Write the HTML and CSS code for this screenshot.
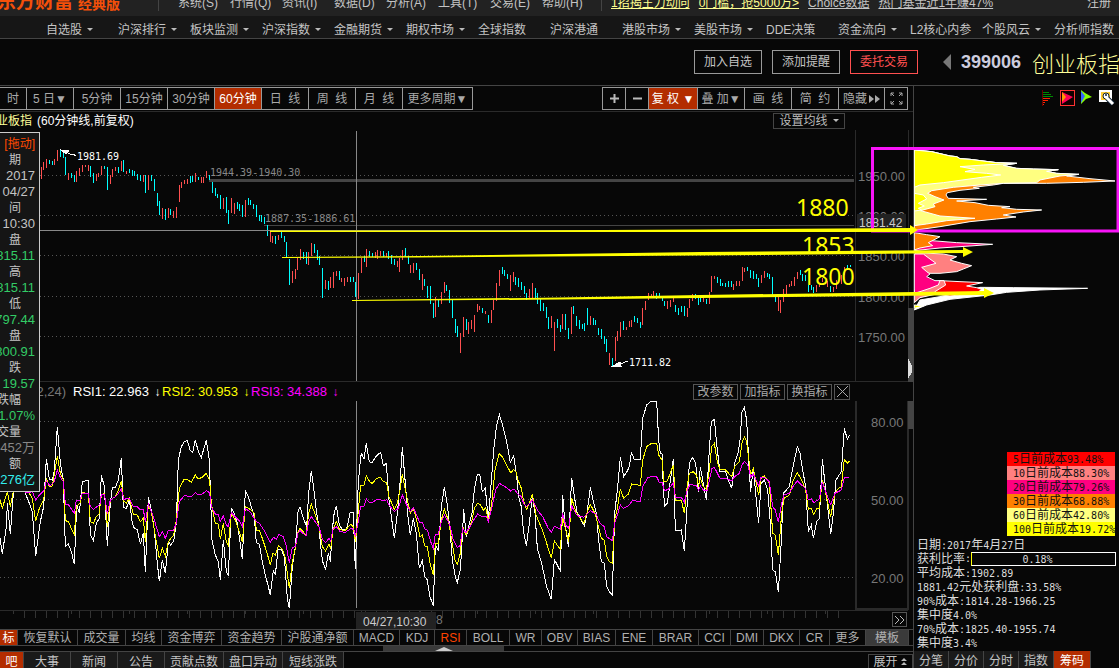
FILE: index.html
```html
<!DOCTYPE html>
<html lang="zh-CN">
<head>
<meta charset="utf-8">
<title>东方财富 经典版</title>
<link rel="stylesheet" href="styles.css">
</head>
<body>
<header class="topbar">
  <div class="logo"><span class="logo-main">东方财富</span><span class="logo-sub">经典版</span></div>
  <nav class="menu">
    <button>系统(S)</button><button>行情(Q)</button><button>资讯(I)</button><button>数据(D)</button><button>分析(A)</button><button>工具(T)</button><button>交易(E)</button><button>帮助(H)</button>
  </nav>
  <div class="promos">
    <a class="hot" href="#">1招揭主力动向</a><a class="hot" href="#">0门槛，抢5000万&gt;</a><a href="#">Choice数据</a><a href="#">热门基金近1年赚47%</a>
  </div>
  <a class="signup" href="#">注册</a>
</header>
<nav class="markets">
  <button class="drop">自选股</button><button class="drop">沪深排行</button><button class="drop">板块监测</button><button class="drop">沪深指数</button><button class="drop">金融期货</button><button class="drop">期权市场</button><button>全球指数</button><button>沪深港通</button><button class="drop">港股市场</button><button class="drop">美股市场</button><button>DDE决策</button><button class="drop">资金流向</button><button>L2核心内参</button><button class="drop">个股风云</button><button>分析师指数</button>
</nav>
<section class="quote">
  <div class="quote-actions">
    <button>加入自选</button><button>添加提醒</button><button class="trade">委托交易</button>
  </div>
  <button class="prev" aria-label="上一只"></button>
  <strong class="code">399006</strong>
  <h1 class="name">创业板指</h1>
</section>
<main class="work">
  <div class="left">
    <div class="toolbar">
      <div class="group">
        <button class="w27">时</button><button class="w47">5 日▼</button><button class="w47">5分钟</button><button class="w47">15分钟</button><button class="w47">30分钟</button><button class="w47 on">60分钟</button><button class="w47">日&nbsp; 线</button><button class="w47">周&nbsp; 线</button><button class="w47">月&nbsp; 线</button><button class="w70">更多周期▼</button>
      </div>
      <div class="group tools">
        <button class="w23" aria-label="放大"><svg width="9" height="9" viewBox="0 0 9 9"><path d="M0 4.500H9M4.500 0V9" stroke="#bbb" stroke-width="2"/></svg></button><button class="w23" aria-label="缩小"><svg width="9" height="9" viewBox="0 0 9 9"><path d="M0 4.500H9" stroke="#bbb" stroke-width="2"/></svg></button><button class="w49 on">复 权 ▼</button><button class="w47">叠 加▼</button><button class="w47">画&nbsp; 线</button><button class="w47">简&nbsp; 约</button>
        <button class="w46">隐藏<svg width="11" height="8" viewBox="0 0 11 8"><path d="M0 0L5 4L0 8ZM6 0L11 4L6 8Z" fill="#aaa"/></svg></button>
        <button class="w23" aria-label="全屏"><svg width="13" height="13" viewBox="0 0 13 13"><path d="M1 4V1H4M1 1L4 4M9 1H12V4M12 1L9 4M1 9V12H4M1 12L4 9M12 9V12H9M12 12L9 9" fill="none" stroke="#aaa"/></svg></button>
      </div>
    </div>
    <section class="price">
      <div class="chart-head">
        <span class="stock">业板指</span><span class="period">(60分钟线,前复权)</span>
        <button class="ma drop">设置均线</button>
      </div>
      <div class="plot">
        <svg class="price-svg" width="913" height="252" viewBox="0 130 913 252">
          <path class="grid" d="M40 175.5H854M40 215.5H854M40 255.5H854M40 296.5H854M40 336.5H854"/>
          <rect x="209" y="179" width="645" height="3" fill="#444"/>
          <rect x="264" y="225" width="590" height="1" fill="#444"/>
          <path class="down" id="down"/><path class="up" id="up"/>
          <path class="cross" d="M40 230.5H855M356.5 131V381"/>
          <path class="frame" d="M855.5 130V382M908.5 130V382M0 381.5H908"/>
          <text class="mono grey" x="210" y="176">1944.39-1940.30</text>
          <text class="mono grey" x="265" y="222">1887.35-1886.61</text>
          <text class="mono" x="77" y="160">1981.69</text>
          <text class="mono" x="629" y="366">1711.82</text>
          <path d="M61 150L69 151L66 154ZM66 152L70 154H73L76 156M613 366L620 362L621 366ZM620 364L628 361" fill="#fff" stroke="#fff"/>
          <g class="axis"><text x="858" y="181">1950.00</text><text x="858" y="221">1900.00</text><text x="858" y="261">1850.00</text><text x="858" y="302">1800.00</text><text x="858" y="342">1750.00</text></g>
          <rect x="857" y="214" width="49" height="15" fill="#222"/>
          <text class="cursor" x="859" y="227">1881.42</text>
          <rect x="908" y="308" width="6" height="74" fill="#444"/>
          <path d="M908 358L912 366V372L908 379Z" fill="#ddd"/>
        </svg>
      </div>
    </section>
    <section class="rsi">
      <div class="rsi-head">
        <span class="params">(6,12,24)</span>
        <span class="r1">RSI1: 22.963<i>↓</i></span><span class="r2">RSI2: 30.953<i>↓</i></span><span class="r3">RSI3: 34.388<i>↓</i></span>
        <div class="rsi-actions"><button>改参数</button><button>加指标</button><button>换指标</button><button class="close" aria-label="关闭"><svg width="11" height="11" viewBox="0 0 11 11"><path d="M0 0L11 11M11 0L0 11" stroke="#aaa"/></svg></button></div>
      </div>
      <div class="plot">
        <svg class="rsi-svg" width="913" height="228" viewBox="0 401 913 228">
          <path class="grid" d="M0 421.5H855M0 499.5H855M0 577.5H855"/>
          <path class="cross" d="M356.5 401V608"/>
          <polyline class="l1" id="rsi1"/><polyline class="l2" id="rsi2"/><polyline class="l3" id="rsi3"/>
          <path class="frame thick" d="M855.5 401V608.5H908V401"/>
          <path class="frame" d="M0 610.5H908"/>
          <path d="M24 614H845" stroke="#333" stroke-width="7" stroke-dasharray="1 10"/>
          <path d="M13 612H845" stroke="#333" stroke-width="3" stroke-dasharray="1 57"/>
          <g class="axis"><text x="871" y="427">80.00</text><text x="871" y="505">50.00</text><text x="871" y="583">20.00</text></g>
          <rect x="356" y="612" width="80" height="17" fill="#222"/>
          <text class="cursor" x="363" y="626">04/27,10:30</text>
          <text class="axis-small" x="436" y="624">8</text>
          <rect x="908" y="401" width="6" height="28" fill="#444"/>
          <path d="M892.5 612.5H906.5V626.5H892.5Z" fill="none" stroke="#555"/>
          <path d="M895 616L899 620L895 624M900 616L904 620L900 624" fill="none" stroke="#bbb"/>
        </svg>
      </div>
    </section>
    <div class="indicators">
      <button class="on t18">标</button><button class="t60">恢复默认</button><button class="t48">成交量</button><button class="t36">均线</button><button class="t60">资金博弈</button><button class="t60">资金趋势</button><button class="t72">沪股通净额</button><button class="t46">MACD</button><button class="t35">KDJ</button><button class="t32 red">RSI</button><button class="t43">BOLL</button><button class="t32">WR</button><button class="t36">OBV</button><button class="t38">BIAS</button><button class="t37">ENE</button><button class="t46">BRAR</button><button class="t32">CCI</button><button class="t33">DMI</button><button class="t36">DKX</button><button class="t30">CR</button><button class="t36">更多</button><button class="t43 tpl">模板</button>
    </div>
    <div class="hscroll"><div class="thumb"><span class="tri"></span></div></div>
    <div class="bottom">
      <button class="on b24">吧</button><button class="b47">大事</button><button class="b47">新闻</button><button class="b47">公告</button><button class="b59">贡献点数</button><button class="b59">盘口异动</button><button class="b61">短线涨跌</button>
      <button class="expand">展开<svg width="7" height="8" viewBox="0 0 7 8"><path d="M3 0L6 3H0ZM3 4L6 7H0Z" fill="#bbb"/></svg></button>
    </div>
  </div>
  <aside class="chips">
    <div class="chip-tools">
      <svg width="74" height="18" viewBox="1041 89 74 18">
        <path d="M1042.5 90V106" stroke="#600" fill="none"/>
        <path d="M1043 92.5H1049M1043 94.5H1051M1043 96.5H1053" stroke="#080" fill="none"/>
        <path d="M1043 98.5H1050M1043 100.5H1048M1043 102.5H1045M1043 104.5H1044" stroke="#f20" fill="none"/>
        <rect x="1060.500" y="90.500" width="14" height="15" fill="#100" stroke="#f33"/>
        <path d="M1062 92L1073 97L1062 104Z" fill="#f05"/><path d="M1062 92L1066 97L1062 102Z" fill="#f90"/>
        <path d="M1081 90L1085 93L1092 97L1086 99L1081 104Z" fill="#8f0"/><path d="M1081 91L1085 96L1081 103Z" fill="#36f"/>
        <rect x="1099" y="90" width="13" height="12" fill="#fff"/><rect x="1101" y="92" width="9" height="8" fill="#fc3"/>
        <path d="M1107 98L1113 104" stroke="#123" stroke-width="5" fill="none"/><circle cx="1106" cy="96" r="3" fill="#fff" stroke="#123"/><path d="M1106 97L1113 104" stroke="#fff" stroke-width="3" fill="none"/><circle cx="1106" cy="95" r="1" fill="#123"/>
      </svg>
    </div>
    <svg class="chip-svg" width="205" height="190" viewBox="914 130 205 190">
      <g transform="translate(860 130) scale(.3333)" stroke="#fff" stroke-width="3">
        <path fill="#ff8000" d="M163 60L215 65L270 78L290 80L300 86L330 88L385 95L410 98L470 100L430 106L470 115L520 117L595 119L560 124L590 130L657 133L620 138L690 146L765 153L670 157L560 160L430 160L400 165L340 172L358 175L300 181L262 188L258 195L265 205L380 208L290 213L345 218L385 226L450 230L425 233L470 238L545 240L490 246L430 255L468 261L410 267L330 275L240 290L170 300H163Z"/>
        <path fill="#ffff80" d="M163 60L215 65L270 78L290 80L300 86L330 88L385 95L410 98L470 100L430 106L470 115L520 117L595 119L560 124L590 130L657 133L600 138L540 150L530 158L430 160L360 165L280 172L215 182L203 190L225 200L252 210L220 222L225 230L182 242L240 258L345 265L260 272L200 282L163 287Z"/>
        <path fill="#ff0" d="M163 60L215 65L270 78L290 80L300 86L330 88L385 95L410 98L470 100L370 105L300 110L345 118L315 125L380 130L422 135L365 142L250 158L180 165L163 172Z"/>
        <path fill="#ff0" d="M163 190L190 195L200 207L175 220L193 228L175 235L185 240L163 243Z"/>
        <path fill="#ff0080" d="M163 335L215 332L290 338L398 343L330 348L240 354L163 362Z"/>
        <path fill="#ff8000" d="M163 308L200 314L240 320L225 328L205 338L218 347L180 354L163 360Z"/>
        <path fill="#ff8080" d="M165 368L250 372L290 380L270 390L305 400L335 407L310 417L290 425L240 430L165 430Z"/>
        <path fill="#fff" d="M163 540L180 510L300 490L360 472L460 473L683 475L540 480L440 487L390 495L270 508L200 525Z"/>
        <path fill="#f00" d="M240 452L300 455L368 458L320 468L350 473L365 478L350 490L270 498L200 490Z"/>
        <path fill="#ff8080" d="M163 518V480L240 452H252L257 465L225 485L230 492L180 503Z"/>
        <path fill="#ff0080" d="M163 372L190 372L210 387L228 400L185 412L200 425L210 432L200 440L225 452H240L235 465L210 475L180 485L163 490Z"/>
        <path fill="#ff0" d="M163 535L190 528L163 525Z"/>
      </g>
    </svg>
    <ul class="legend">
      <li class="c5"><b>5</b>日前成本<b>93.48%</b></li><li class="c10"><b>10</b>日前成本<b>88.30%</b></li><li class="c20"><b>20</b>日前成本<b>79.26%</b></li><li class="c30"><b>30</b>日前成本<b>68.88%</b></li><li class="c60"><b>60</b>日前成本<b>42.80%</b></li><li class="c100"><b>100</b>日前成本<b>19.72%</b></li>
    </ul>
    <div class="stats">
      <p>日期<b>:2017</b>年<b>4</b>月<b>27</b>日</p>
      <p class="ratio">获利比率<b>:</b><span class="bar"><b>0.18%</b></span></p>
      <p>平均成本<b>:1902.89</b></p>
      <p><b>1881.42</b>元处获利盘<b>:33.58%</b></p>
      <p><b>90%</b>成本<b>:1814.28-1966.25</b></p>
      <p>集中度<b>4.0%</b></p>
      <p><b>70%</b>成本<b>:1825.40-1955.74</b></p>
      <p>集中度<b>3.4%</b></p>
    </div>
    <div class="chip-tabs"><button>分笔</button><button>分价</button><button>分时</button><button>指数</button><button class="on">筹码</button></div>
  </aside>
  <svg class="marks" width="1119" height="583" viewBox="0 85 1119 583">
    <path d="M1118 148.500H872.500V231H1118Z" fill="none" stroke="#f814f8" stroke-width="3"/>
    <g fill="#ff0">
      <path d="M270 230.500L500 230.500L700 229.500L910 228V225L918 230L910 235V232L270 232Z"/>
      <path d="M282 257L420 256L700 252L963 250V247L973 252L963 257V253L700 255.500L420 257.500L282 258Z"/>
      <path d="M352 300L560 297.500L700 295L984 291V288L994 293L984 298V295L700 298L560 299.500L352 301Z"/>
      <text class="level" x="796" y="216">1880</text><text class="level" x="802" y="254">1853</text><text class="level" x="802" y="285">1800</text>
    </g>
  </svg>
  <section class="info">
    <p class="drag">[拖动]</p>
    <p class="k">期</p><p>2017</p><p>04/27</p>
    <p class="k">间</p><p>10:30</p>
    <p class="k">盘</p><p class="g">1815.11</p>
    <p class="k">高</p><p class="g">1815.11</p>
    <p class="k">低</p><p class="g">1797.44</p>
    <p class="k">盘</p><p class="g">1800.91</p>
    <p class="k">跌</p><p class="g">▼19.57</p>
    <p class="k">跌幅</p><p class="g">-1.07%</p>
    <p class="k">交量</p><p class="dim">1452万</p>
    <p class="k">额</p><p class="cy">276亿</p>
  </section>
</main>
<script src="charts.js"></script>
</body>
</html>
```
FILE: styles.css
```css
* { box-sizing: border-box; }
html { overflow: hidden; }
body {
  margin: 0;
  height: 100vh;
  display: flex;
  flex-direction: column;
  overflow: hidden;
  background: #070707;
  color: #c4c4c4;
  font: 12px/16px "Liberation Sans", "Noto Sans CJK SC", sans-serif;
}
button {
  margin: 0;
  padding: 0;
  border: 0;
  background: none;
  color: inherit;
  font: inherit;
  white-space: nowrap;
}
a { color: inherit; }
p, ul { margin: 0; padding: 0; }
svg { display: block; flex: none; }

.topbar {
  flex: none;
  display: flex;
  align-items: flex-end;
  height: 16px;
  padding-bottom: 5px;
  overflow: hidden;
  background: #222;
  white-space: nowrap;
}
.logo {
  width: 159px;
  display: flex;
  align-items: flex-end;
  gap: 5px;
  border-right: 1px solid #444;
  color: #f5500a;
  font-weight: bold;
}
.logo-main { width: 73px; display: flex; justify-content: flex-end; font-size: 19px; line-height: 18px; }
.logo-sub { font-size: 14px; line-height: 14px; }
.menu { display: flex; width: 443px; padding-left: 19px; border-right: 1px solid #444; }
.menu button { width: 52px; text-align: left; }
.promos { display: flex; gap: 9px; padding-left: 9px; }
.promos .hot { color: #ffff90; }
.signup { margin-left: auto; padding-right: 8px; text-decoration: none; }

.markets {
  flex: none;
  display: flex;
  height: 23px;
  padding: 5px 0 0 46px;
  overflow: hidden;
  background: #161616;
  border-bottom: 1px solid #444;
}
.markets button { flex: 1 0 72px; text-align: left; }
.drop::after {
  content: "";
  display: inline-block;
  margin-left: 5px;
  vertical-align: 3px;
  border: 3px solid transparent;
  border-top-color: #bbb;
  border-bottom: 0;
}

.quote { flex: none; display: flex; align-items: center; height: 46px; overflow: hidden; justify-content: flex-end; }
.quote-actions { display: flex; gap: 10px; }
.quote-actions button { width: 68px; height: 24px; border: 1px solid #999; }
.quote-actions .trade { border-color: #ff5050; color: #ff5050; }
.prev { margin: 0 10px 0 25px; border: 8px solid transparent; border-left: 0; border-right-color: #777; }
.code { width: 71px; font-size: 18px; color: #ccd; }
.name { margin: 0; width: 87px; overflow: hidden; white-space: nowrap; font: 300 22px/28px "Noto Sans CJK SC", sans-serif; color: #ffff99; }

.work { flex: 1; display: flex; position: relative; min-height: 0; border-top: 1px solid #444; }
.left { flex: 1; min-width: 0; display: flex; flex-direction: column; overflow: hidden; }
.toolbar { flex: none; display: flex; justify-content: space-between; height: 26px; padding: 1px 5px 1px 0; border-bottom: 1px solid #2a2a2a; }
.group { display: flex; }
.group button { display: flex; align-items: center; justify-content: center; gap: 2px; border: 1px solid #999; border-left: 0; color: #aaa; }
.tools button:first-child { width: 24px; border-left: 1px solid #999; }
.group .on { background: #b32d00; color: #fff; }
.w23 { width: 23px; } .w27 { width: 27px; } .w46 { width: 46px; } .w47 { width: 47px; } .w49 { width: 49px; } .w70 { width: 70px; }

.chart-head { display: flex; height: 18px; align-items: center; color: #fff; }
.stock { width: 32px; display: flex; justify-content: flex-end; color: #ffff99; white-space: nowrap; overflow: hidden; }
.period { padding-left: 5px; }
.ma { margin-left: auto; margin-right: 68px; width: 72px; height: 16px; line-height: 14px; border: 1px solid #444; color: #bbb; }
.plot { display: flex; justify-content: flex-end; overflow: hidden; }
.plot path, .plot rect, .plot polyline { shape-rendering: crispEdges; }
.grid { stroke: #555; stroke-dasharray: 1 3; }
.cross { stroke: #888; }
.up, .down, .frame, .l1, .l2, .l3 { fill: none; }
.up { stroke: #ff5050; }
.down { stroke: #00ffff; }
.frame { stroke: #2a2a2a; }
.thick { stroke-width: 2px; }
.l1 { stroke: #fff; }
.l2 { stroke: #ff0; }
.l3 { stroke: #f0f; }
.mono { font: 10px "DejaVu Sans Mono", monospace; fill: #fff; }
.mono.grey { fill: #888; }
.axis { font-size: 13px; fill: #777; }
.axis-small { font-size: 12px; fill: #777; }
.cursor { font-size: 12px; fill: #ccc; }
.level { font: 23px "Noto Sans", sans-serif; }

.rsi-head { display: flex; align-items: center; height: 19px; font-size: 13px; white-space: nowrap; }
.params { width: 73px; padding-left: 14px; color: #777; }
.rsi-head i { margin-left: 5px; font: 12px "Liberation Mono", monospace; }
.r1, .r2, .r3 { width: 89px; }
.r1 { color: #fff; } .r2 { color: #ff0; } .r3 { color: #f0f; }
.rsi-actions { display: flex; gap: 2px; margin-left: auto; margin-right: 63px; font-size: 12px; }
.rsi-actions button { width: 45px; height: 16px; line-height: 14px; border: 1px solid #555; color: #aaa; }
.rsi-actions .close { width: 16px; padding-left: 2px; }

.indicators { flex: none; display: flex; height: 17px; border-top: 1px solid #444; border-bottom: 1px solid #444; }
.indicators button { line-height: 16px; border-right: 1px solid #444; color: #b0b0b0; overflow: hidden; }
.indicators .on, .bottom .on, .chip-tabs .on { background: #b32d00; color: #fff; }
.indicators .red { color: #ff4400; }
.indicators .tpl { background: #3a3a3a; }
.t18 { width: 18px; } .t30 { width: 30px; } .t32 { width: 32px; } .t33 { width: 33px; } .t35 { width: 35px; } .t36 { width: 36px; }
.t37 { width: 37px; } .t38 { width: 38px; } .t43 { width: 43px; } .t46 { width: 46px; } .t48 { width: 48px; } .t60 { width: 60px; } .t72 { width: 72px; }
.hscroll { flex: none; height: 6px; display: flex; border-bottom: 1px solid #444; }
.thumb { width: 121px; margin-left: 383px; display: flex; justify-content: center; align-items: center; background: #3a3a3a; }
.tri { border: 9px solid transparent; border-top: 0; border-bottom: 4px solid #ccc; }
.bottom { flex: 1; display: flex; min-height: 16px; overflow: hidden; }
.bottom button { line-height: 20px; background: #1a1a1a; border-right: 1px solid #444; align-self: stretch; }
.bottom .expand { margin-left: auto; width: 45px; margin-top: 2px; display: flex; justify-content: center; align-items: center; gap: 3px; background: none; border: 1px solid #444; border-bottom: 0; line-height: 16px; }
.b24 { width: 24px; } .b47 { width: 47px; } .b59 { width: 59px; } .b61 { width: 61px; }

.chips { flex: none; width: 206px; display: flex; flex-direction: column; border-left: 1px solid #444; overflow: hidden; }
.chip-tools { display: flex; justify-content: flex-end; height: 44px; padding: 3px 4px 0 0; }
.chips b { font: 10px/14px "DejaVu Sans Mono", monospace; }
.legend { width: 108px; margin: 132px 4px 2px auto; list-style: none; color: #111; white-space: nowrap; }
.legend li { height: 14px; line-height: 14px; padding-left: 6px; }
.c5 { background: #f00; } .c10 { background: #ff8080; } .c20 { background: #ff0080; }
.c30 { background: #ff8000; } .c60 { background: #ffff80; } .c100 { background: #ff0; }
.stats { padding-left: 3px; color: #ddd; white-space: nowrap; }
.stats p { height: 14px; line-height: 14px; }
.ratio { display: flex; }
.bar { flex: 1; margin-right: 3px; padding-right: 12px; text-align: center; line-height: 12px; border: 1px solid #fff; border-left-color: #ff0; }
.bar b { line-height: 12px; }
.chip-tabs { flex: 1; display: flex; min-height: 17px; margin-top: 1px; }
.chip-tabs button { width: 35px; line-height: 20px; align-self: stretch; background: #1a1a1a; border-right: 1px solid #444; }
.chip-tabs .on { width: 37px; }

.marks { position: absolute; right: 0; top: -1px; pointer-events: none; }
.info {
  position: absolute;
  left: 0;
  top: 46px;
  width: 40px;
  padding: 3px 4px 3px 0;
  overflow: hidden;
  background: #151515;
  border: 1px solid #ccc;
  border-left: 0;
}
.info p { display: flex; justify-content: flex-end; height: 16px; white-space: nowrap; font-size: 13px; }
.info .k { padding-right: 14px; font-size: 12px; }
.info .drag { color: #ff4a00; font-size: 12px; }
.info .g { color: #3c6; }
.info .dim { color: #888; }
.info .cy { color: #3ee; }
```
FILE: charts.js
```js
// Bars are "x,top,bottom"; every block has its own origin, three units to a pixel.
const blocks = [
  { ox: 0, oy: 130,
    up: "124,110,147 130,96,120 139,86,113 163,86,104 172,60,94 205,128,150 229,122,156 238,115,137 247,105,127 256,104,112 265,104,124 289,132,154 296,128,142 304,107,134 331,134,161 337,116,140 346,112,122 364,92,124 379,122,132 430,136,156 445,136,180 487,233,266 505,234,263 520,243,264 529,230,264 538,164,216 544,156,173 553,149,162 562,148,163 586,129,156 604,141,159 610,141,160 619,122,144 670,204,236 694,204,248 703,219,253 736,210,261 811,303,336 817,318,339 836,315,330 877,423,459 886,417,447 892,384,420 901,357,390 925,366,405 934,339,378 976,450,477 991,441,474 1000,426,474 1009,423,438 1024,444,456 1033,444,468 1042,441,456 1075,429,507",
    down: "148,89,103 157,94,104 181,60,80 190,70,84 196,80,135 214,130,143 223,136,156 271,109,140 280,130,159 313,109,118 322,110,180 355,110,130 370,90,127 388,116,130 397,119,137 403,123,139 412,132,150 421,134,153 436,134,189 454,134,153 463,146,183 472,189,228 478,213,254 496,237,270 511,237,255 571,137,159 577,138,155 595,141,150 628,134,150 637,155,189 646,173,198 652,192,203 661,195,237 679,200,250 685,240,282 712,216,236 718,222,243 727,225,261 745,204,224 751,210,225 760,222,236 769,225,262 778,255,273 784,255,276 793,261,282 802,285,318 826,318,342 844,304,325 853,318,336 859,336,381 868,387,465 910,366,387 919,366,402 943,342,369 952,360,390 958,378,405 967,414,504 985,453,480 1018,423,450 1051,441,456 1060,441,456 1066,456,501" },
  { ox: 340, oy: 230,
    up: "64,84,129 79,57,111 106,67,84 112,60,87 121,63,79 139,68,82 172,92,112 178,83,126 187,60,90 211,105,129 220,98,129 247,132,180 286,201,261 304,186,222 313,156,189 361,309,369 370,261,321 385,276,312 394,270,297 403,255,306 412,222,246 418,228,240 436,243,252 454,240,279 460,210,240 469,159,213 478,120,168 511,135,183 520,126,156 568,177,204 577,159,205 634,258,294 643,276,363 667,252,297 694,231,312 751,258,285 808,369,405 826,321,393 832,303,333 841,276,321 859,291,300 868,273,291 874,270,291 907,234,285 916,213,240",
    down: "73,78,95 88,63,82 97,69,81 130,63,80 145,63,87 154,75,102 163,87,105 196,54,80 205,78,102 229,99,120 238,117,150 253,147,168 262,168,204 271,168,222 280,219,264 295,210,231 319,165,183 328,180,219 337,208,264 346,267,309 352,288,321 379,267,300 427,234,249 445,255,279 487,111,132 493,120,138 502,132,147 526,141,165 535,144,171 544,156,180 553,168,192 559,189,210 586,174,204 592,189,222 601,207,243 610,219,243 619,231,264 625,261,297 652,267,294 661,285,306 676,252,300 685,294,327 700,228,252 709,258,288 718,270,297 727,282,297 733,279,303 742,234,285 760,264,285 766,270,285 775,294,315 784,297,327 793,318,342 799,327,366 817,384,408 850,273,300 883,258,276 892,264,279 901,276,294" },
  { ox: 640, oy: 130,
    up: "25,489,510 34,492,501 40,483,498 82,513,537 91,510,531 100,498,516 142,534,561 148,507,534 157,492,513 190,501,516 208,486,522 214,438,486 223,438,447 280,462,480 289,453,468 298,453,468 307,411,453 313,414,426 364,435,459 373,423,444 415,501,543 421,510,549 430,477,516 439,465,492 448,462,471 454,453,468 463,441,468 472,426,447 529,465,486 538,459,471 547,444,456 562,453,471 580,471,486 589,450,477 604,435,462 613,411,435",
    down: "49,489,507 58,489,504 67,501,513 73,513,528 106,525,546 115,534,555 124,528,546 133,528,558 166,492,507 175,501,525 181,504,516 199,507,522 232,441,459 241,447,468 247,459,468 256,459,471 265,453,471 274,453,471 322,411,423 331,420,444 340,423,447 349,432,447 355,444,471 382,429,441 388,432,447 397,441,495 406,495,516 481,420,435 487,432,453 496,435,453 505,465,486 514,465,480 520,471,489 571,468,486 622,405,420 631,405,411" }
];

for (const kind of ["up", "down"]) {
  document.getElementById(kind).setAttribute("d", blocks.map(b =>
    b[kind].split(" ").map(s => {
      const [x, top, bottom] = s.split(",").map(Number);
      return `M${b.ox + Math.floor(x / 3) + 0.5} ${b.oy + Math.round(top / 3)}V${b.oy + Math.round(bottom / 3)}`;
    }).join("")).join(""));
}

// Each RSI line comes in three segments that start at these x positions.
const starts = [0, 290, 580];
const rsi = {
  rsi1: [
    "0,475 7,522 19,440 22,370 31,462 40,340 56,300 75,337 88,370 97,395 107,528 121,425 131,380 139,236 148,298 157,300 163,270 172,140 181,250 190,300 196,500 205,492 214,515 223,552 230,375 238,400 247,304 265,302 271,465 280,482 289,430 298,415 304,285 313,320 322,498 331,370 337,322 346,322 355,300 364,234 370,383 379,385 388,360 397,430 403,445 412,448 421,492 430,460 436,576 445,350 454,390 463,450 472,550 478,604 487,540 496,580 505,485 512,495 521,483 529,430 535,240 544,200 553,185 562,182 571,212 578,218 586,180 595,215 604,232 619,180 628,240 636,480 646,525 655,545 661,600 670,480 679,575 685,585 694,385 703,400 712,430 718,470 727,538 736,332 745,350 754,380 763,410 769,488 778,492 787,545 796,585 805,620 811,645 820,570 826,585 834,508 844,508 853,530 862,655 868,684 877,560 886,500 894,395",
    "30,380 40,415 50,440 56,340 64,272 73,340 80,400 87,440 92,500 98,545 107,568 115,520 121,545 128,440 133,395 139,378 148,435 157,448 166,450 172,440 180,398 190,398 193,490 196,568 204,330 208,270 214,218 222,238 229,190 238,245 246,248 256,232 265,222 272,218 280,258 289,250 297,360 304,410 313,475 322,400 330,310 337,202 346,310 354,410 361,465 370,415 379,460 388,565 397,542 404,590 411,598 420,650 430,678 436,495 445,510 454,380 463,322 472,375 480,450 487,540 496,590 502,607 511,570 517,470 521,388 529,470 538,430 546,400 553,330 562,282 569,282 577,335 586,325 595,420 602,330 611,210 620,135 628,103 636,130 650,185 661,248 671,228 680,290 686,350 694,380 700,450 709,498 718,430 727,350 735,400 742,505 755,550 770,620 784,658 793,538 811,573 818,345 824,420 835,500 845,293 853,350 862,400 870,410",
    "0,415 13,437 21,400 31,322 40,365 49,400 56,480 64,545 73,550 80,620 88,635 97,645 104,400 112,330 121,232 131,290 141,275 148,260 154,218 163,238 181,238 188,115 200,75 212,65 230,64 236,180 241,220 247,222 250,330 254,378 262,370 270,310 280,236 286,452 298,452 304,450 313,513 320,400 328,250 337,232 347,250 355,335 361,262 370,310 379,360 388,210 394,125 403,118 412,210 420,275 437,275 445,300 455,325 464,250 475,215 480,180 486,95 493,82 500,120 506,240 512,335 520,260 528,350 536,430 543,310 553,300 563,330 571,430 578,570 586,575 595,637 603,500 610,340 628,320 637,270 652,200 660,220 668,270 677,320 685,455 694,435 700,475 710,425 718,415 727,238 735,310 742,370 752,463 760,400 768,300 784,275 793,145 802,178 808,165"
  ],
  rsi2: [
    "0,360 7,384 22,335 31,380 40,335 64,310 88,340 97,355 107,423 118,385 131,360 139,295 148,320 157,318 172,228 181,280 190,300 196,422 206,425 214,447 223,465 229,380 240,370 247,338 265,340 271,425 280,430 289,410 297,403 304,345 314,340 322,440 331,360 346,350 355,330 364,302 371,363 379,370 388,355 400,403 412,405 421,425 430,415 436,485 445,375 454,395 463,450 478,535 487,505 496,528 505,485 521,465 529,420 538,325 553,297 564,300 574,307 586,285 594,297 607,292 619,280 629,302 634,370 640,400 646,430 655,432 661,478 670,430 679,485 685,497 694,400 706,420 718,455 727,485 736,380 750,388 763,400 769,450 778,452 787,475 800,515 811,555 818,520 826,525 835,498 847,507 855,530 868,625 877,545 886,505 894,455",
    "30,445 48,465 56,400 64,372 78,410 87,440 97,500 107,513 117,492 122,508 129,450 139,425 148,448 165,452 182,433 190,440 196,485 200,450 206,380 212,315 222,315 229,288 240,307 247,310 260,295 272,292 278,303 290,308 297,350 313,388 322,370 330,330 337,282 350,350 361,400 370,385 380,420 390,470 397,465 404,498 412,500 420,550 430,585 436,490 445,490 454,420 463,388 475,420 485,480 495,540 502,552 511,520 518,440 528,465 538,445 546,420 553,385 563,370 572,375 580,390 587,383 595,420 605,370 615,270 628,220 640,235 655,265 663,280 670,268 678,275 684,300 694,325 701,365 710,388 718,370 727,342 738,405 755,445 770,490 784,535 793,483 811,508 818,410 827,450 836,485 845,355 858,395 868,410",
    "0,415 12,430 22,395 31,373 45,400 55,440 64,475 73,480 80,530 88,545 97,550 104,420 112,385 121,327 131,355 145,342 155,312 181,316 188,240 200,200 215,190 230,190 236,225 246,240 252,305 262,303 280,255 286,360 304,360 313,400 320,330 328,280 340,275 350,285 355,320 361,295 370,320 379,328 388,270 395,200 403,190 412,245 420,268 437,270 455,290 464,260 478,245 486,190 493,170 500,185 512,285 520,265 536,345 543,295 553,287 568,310 578,460 586,465 595,525 605,400 612,355 628,345 640,300 652,278 665,300 677,330 685,388 694,385 701,403 710,385 718,385 727,300 735,330 752,410 765,340 775,325 784,320 793,238 802,250 808,243"
  ],
  rsi3: [
    "0,330 88,337 97,335 107,360 117,347 131,333 139,303 150,317 162,307 172,270 181,292 190,305 196,372 206,375 223,400 229,360 240,360 247,340 265,340 271,380 280,388 300,373 304,342 314,345 322,403 331,360 350,347 364,326 371,358 388,355 400,380 412,380 421,390 430,388 436,425 445,372 460,410 478,470 487,455 496,475 505,450 520,452 529,430 538,365 553,347 574,350 586,338 594,345 607,342 619,332 629,338 634,380 646,402 655,403 661,425 670,408 679,435 685,440 694,398 706,410 718,422 727,440 736,385 750,395 769,425 778,430 795,455 811,487 820,472 829,477 837,463 850,470 858,495 868,548 877,503 886,500 894,460",
    "30,452 48,468 56,425 64,410 87,440 97,478 107,487 117,475 122,485 129,447 139,440 150,455 166,457 184,445 192,450 196,470 204,430 212,378 222,378 229,357 238,368 247,367 262,358 285,362 290,358 297,375 313,395 325,385 337,345 350,375 361,395 370,383 382,410 388,427 397,428 405,447 412,450 422,485 430,505 436,462 445,462 454,425 463,405 478,430 490,480 502,503 510,497 518,445 528,458 538,443 548,425 563,402 575,410 590,410 595,425 606,380 617,330 628,310 645,320 662,333 672,327 684,342 694,350 701,370 710,380 727,360 742,390 758,410 775,445 784,457 793,438 811,447 818,400 827,435 836,445 845,378 858,402 868,410",
    "0,408 12,412 22,400 31,392 48,402 60,430 73,440 80,470 97,482 104,430 112,405 121,375 130,385 145,378 157,362 181,364 188,320 203,293 215,290 230,290 238,307 246,307 254,332 265,328 280,308 286,352 304,352 313,367 322,330 330,313 350,318 355,330 361,318 370,330 382,330 388,300 396,265 403,262 420,295 437,295 455,303 464,290 478,280 486,255 493,244 503,255 512,290 520,282 536,318 543,292 553,292 568,305 578,380 586,390 595,427 605,370 612,345 628,340 640,318 652,303 665,315 677,325 685,360 694,357 701,368 718,357 727,305 735,330 752,373 765,340 784,330 793,292 808,292"
  ]
};
for (const [id, parts] of Object.entries(rsi)) {
  document.getElementById(id).setAttribute("points", parts.map((part, i) =>
    part.split(" ").map(s => {
      const [x, y] = s.split(",").map(Number);
      return `${starts[i] + x / 3},${380 + y / 3}`;
    }).join(" ")).join(" "));
}
```
